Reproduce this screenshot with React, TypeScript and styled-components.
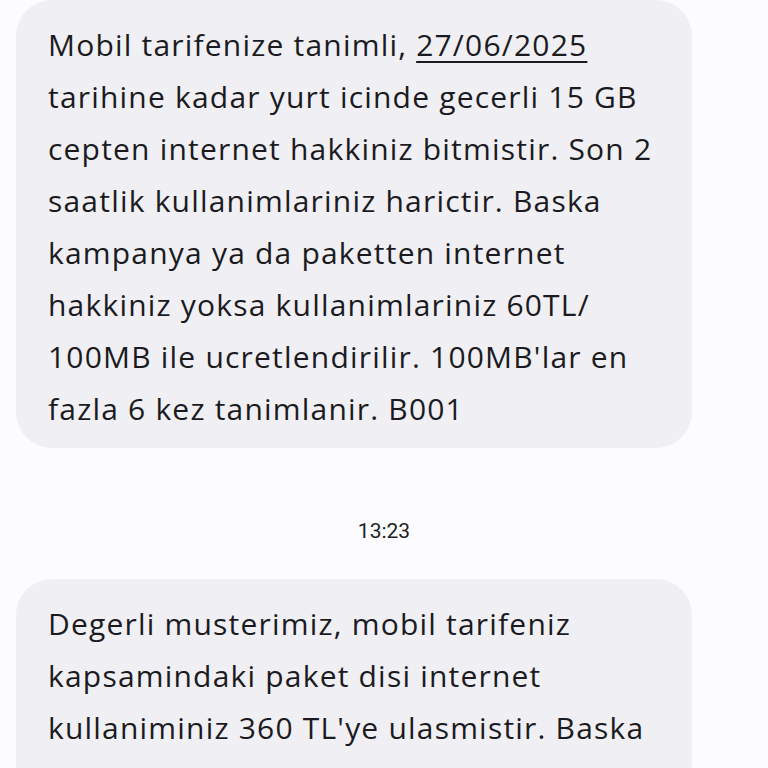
import React from 'react'
import styled, { createGlobalStyle } from 'styled-components'

const GlobalStyle = createGlobalStyle`
  html, body {
    margin: 0;
    padding: 0;
    background: #fcfbfe;
  }
  body {
    font-family: "Open Sans", Roboto, sans-serif;
    color: #1b1b1f;
  }
`

const Thread = styled.div`
  display: flex;
  flex-direction: column;
  padding: 0 76px 0 16px;
  height: 768px;
  overflow: hidden;
`

const Bubble = styled.div`
  background: #f0eff4;
  border-radius: 36px;
  padding: 19px 32px 13px;
  font-size: 30px;
  line-height: 52px;
  letter-spacing: 1.2px;
`

const Line = styled.span`
  display: block;
  white-space: nowrap;
`

const DateLink = styled.span`
  text-decoration: underline;
  text-decoration-thickness: 2px;
  text-underline-offset: 5px;
`

const Stamp = styled.div`
  text-align: center;
  font-family: Roboto, sans-serif;
  font-size: 21px;
  line-height: 24px;
  color: #1f1f23;
  margin: 71px 0 36px;
  padding-left: 60px;
`

const first = [
  'tarihine kadar yurt icinde gecerli 15 GB',
  'cepten internet hakkiniz bitmistir. Son 2',
  'saatlik kullanimlariniz harictir. Baska',
  'kampanya ya da paketten internet',
  'hakkiniz yoksa kullanimlariniz 60TL/',
  "100MB ile ucretlendirilir. 100MB'lar en",
  'fazla 6 kez tanimlanir. B001',
]

const second = [
  'Degerli musterimiz, mobil tarifeniz',
  'kapsamindaki paket disi internet',
  "kullaniminiz 360 TL'ye ulasmistir. Baska",
  'hicbir paketiniz veya hakkiniz yoksa',
]

export default function App() {
  return (
    <>
      <GlobalStyle />
      <Thread>
        <Bubble>
          <Line>
            Mobil tarifenize tanimli, <DateLink>27/06/2025</DateLink>
          </Line>
          {first.map((t) => (
            <Line key={t}>{t}</Line>
          ))}
        </Bubble>
        <Stamp>13:23</Stamp>
        <Bubble>
          {second.map((t) => (
            <Line key={t}>{t}</Line>
          ))}
        </Bubble>
      </Thread>
    </>
  )
}
